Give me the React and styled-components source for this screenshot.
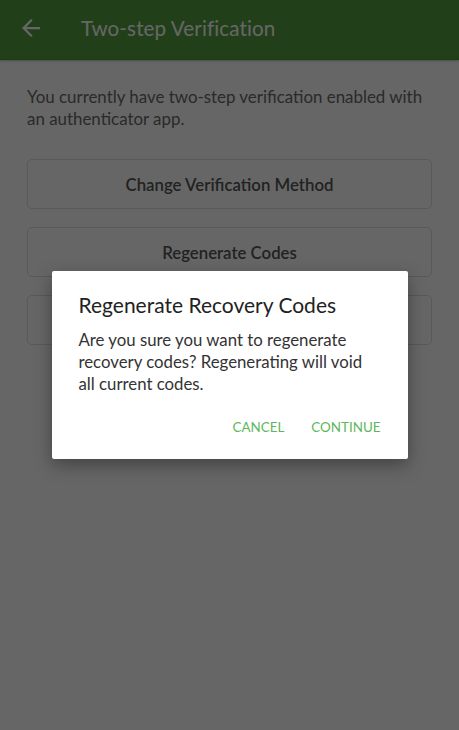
import React from "react";
import styled, { createGlobalStyle } from "styled-components";

const Global = createGlobalStyle`
  html, body { margin: 0; padding: 0; }
  body { font-family: Lato, "Noto Sans", sans-serif; background: #ffffff; }
  * { box-sizing: border-box; }
`;

const Page = styled.div`
  position: relative;
  width: 459px;
  height: 730px;
  overflow: hidden;
  background: #ffffff;
`;

const Header = styled.header`
  height: 60px;
  background: #539e3f;
  display: flex;
  align-items: center;
  padding: 0 0 3px 22px;
  border-bottom: 1px solid #4a8f38;
  box-shadow: 0 1px 2px rgba(0, 0, 0, 0.25);
`;

const BackButton = styled.button`
  width: 18px;
  height: 18px;
  padding: 0;
  border: 0;
  background: none;
  display: flex;
  color: #ffffff;
  margin-right: 41px;
`;

const Title = styled.h1`
  margin: 0;
  font-size: 20.6px;
  font-weight: 400;
  color: #ffffff;
  letter-spacing: 0.1px;
`;

const Content = styled.main`
  padding: 26px 27px 0 27px;
  display: flex;
  flex-direction: column;
`;

const Intro = styled.p`
  margin: 0 0 29px 0;
  font-size: 16.9px;
  line-height: 22px;
  color: #6a6a6a;
`;

const Actions = styled.div`
  display: flex;
  flex-direction: column;
  gap: 18px;
`;

const OutlineButton = styled.button`
  height: 50px;
  width: 100%;
  border: 1px solid #dedede;
  border-radius: 5px;
  background: #ffffff;
  font-family: inherit;
  font-size: 16.8px;
  font-weight: 600;
  color: #555555;
`;

const Overlay = styled.div`
  position: absolute;
  inset: 0;
  background: rgba(0, 0, 0, 0.6);
  display: flex;
  align-items: center;
  justify-content: center;
`;

const Dialog = styled.div`
  width: 356px;
  height: 188px;
  background: #ffffff;
  border-radius: 2px;
  box-shadow: 0 6px 18px rgba(0, 0, 0, 0.35);
  padding: 20px 27px 0 27px;
  display: flex;
  flex-direction: column;
`;

const DialogTitle = styled.h2`
  margin: 0 0 10px 0;
  font-size: 21px;
  line-height: 28px;
  font-weight: 400;
  color: #222222;
`;

const DialogText = styled.p`
  margin: 0;
  padding-right: 10px;
  font-size: 16.8px;
  line-height: 22px;
  color: #333333;
`;

const DialogFooter = styled.div`
  margin-top: 24px;
  display: flex;
  justify-content: flex-end;
  gap: 27px;
`;

const TextButton = styled.button`
  border: 0;
  background: none;
  padding: 0;
  font-family: inherit;
  font-size: 13.4px;
  text-transform: uppercase;
  color: #5cb85c;
  letter-spacing: 0;
`;

const ArrowBack = () => (
  <svg width="18" height="18" viewBox="0 0 16 16" fill="currentColor">
    <path d="M16 7H3.83l5.59-5.59L8 0 0 8l8 8 1.41-1.41L3.83 9H16z" />
  </svg>
);

export default function App() {
  return (
    <>
      <Global />
      <Page>
        <Header>
          <BackButton aria-label="Back">
            <ArrowBack />
          </BackButton>
          <Title>Two-step Verification</Title>
        </Header>
        <Content>
          <Intro>
            You currently have two-step verification enabled with an
            authenticator app.
          </Intro>
          <Actions>
            <OutlineButton>Change Verification Method</OutlineButton>
            <OutlineButton>Regenerate Codes</OutlineButton>
            <OutlineButton aria-label="Disable Two-step Verification" />
          </Actions>
        </Content>
        <Overlay>
          <Dialog role="dialog">
            <DialogTitle>Regenerate Recovery Codes</DialogTitle>
            <DialogText>
              Are you sure you want to regenerate recovery codes? Regenerating
              will void all current codes.
            </DialogText>
            <DialogFooter>
              <TextButton>Cancel</TextButton>
              <TextButton>Continue</TextButton>
            </DialogFooter>
          </Dialog>
        </Overlay>
      </Page>
    </>
  );
}
